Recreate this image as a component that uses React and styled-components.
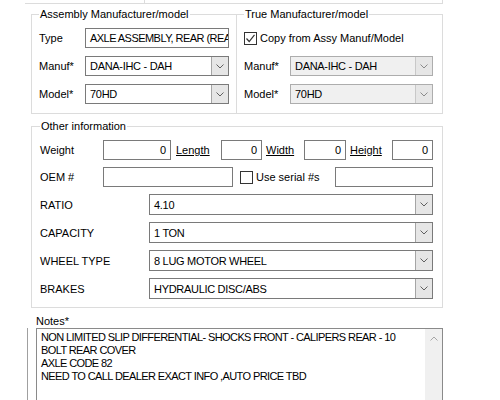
import styled, { createGlobalStyle } from "styled-components";

const GlobalStyle = createGlobalStyle`
  html, body {
    margin: 0;
    padding: 0;
    background: #fff;
    overflow: hidden;
  }
  body {
    font-family: "Liberation Sans", Arial, sans-serif;
    font-size: 11px;
    color: #000;
  }
`;

const Page = styled.div`
  width: 500px;
  height: 400px;
  overflow: hidden;
`;

const TopEdge = styled.div`
  display: flex;
  margin-left: 25px;
  width: 417px;
  height: 3px;
  border-bottom: 1px solid #dcdcdc;
  border-right: 1px solid #dcdcdc;
`;

const TopCell = styled.div`
  width: 119px;
  border-right: 1px solid #dcdcdc;
`;

const GroupRow = styled.div`
  display: flex;
  margin: 3px 0 0 31px;
`;

const Group = styled.fieldset`
  box-sizing: border-box;
  width: ${(p) => p.$w}px;
  min-width: 0;
  margin: ${(p) => p.$m || "0"};
  padding: 7px ${(p) => p.$pr}px ${(p) => p.$pb}px ${(p) => p.$pl}px;
  border: 1px solid #dcdcdc;
  ${(p) => p.$joined && "border-left: none;"}
`;

const Legend = styled.legend`
  margin: 0;
  padding: 0 1px;
  line-height: 14px;
`;

const FieldGrid = styled.div`
  display: grid;
  grid-template-columns: ${(p) => p.$label}px 1fr;
  grid-auto-rows: 20px;
  row-gap: 8px;
  align-items: center;
`;

const Label = styled.span`
  white-space: nowrap;
  ${(p) => p.$w && `width: ${p.$w}px; flex: none;`}
`;

const UnderLabel = styled.span`
  padding-left: ${(p) => p.$pl}px;
  text-decoration: underline;
  white-space: nowrap;
`;

const TextBox = styled.div`
  box-sizing: border-box;
  height: 20px;
  ${(p) => p.$w && `width: ${p.$w}px; flex: none;`}
  display: flex;
  align-items: center;
  justify-content: ${(p) => (p.$right ? "flex-end" : "flex-start")};
  padding: 0 ${(p) => (p.$caps ? 0 : 4)}px 0 4px;
  border: 1px solid #7a7a7a;
  background: #fff;
  white-space: nowrap;
  overflow: hidden;
  letter-spacing: ${(p) => (p.$caps ? "-0.55px" : "0")};
`;

const Combo = styled.div`
  box-sizing: border-box;
  display: flex;
  height: ${(p) => p.$h || 20}px;
  border: 1px solid ${(p) => (p.$disabled ? "#adadad" : "#7a7a7a")};
  background: ${(p) => (p.$disabled ? "#f0f0f0" : "#fff")};
`;

const ComboValue = styled.div`
  flex: 1;
  display: flex;
  align-items: center;
  padding-left: 4px;
  white-space: nowrap;
  overflow: hidden;
  letter-spacing: -0.3px;
`;

const ComboButton = styled.div`
  width: 16px;
  display: flex;
  align-items: center;
  justify-content: center;
  background: #e6e6e6;
  border-left: 1px solid ${(p) => (p.$disabled ? "#c8c8c8" : "#a5a5a5")};
`;

const CheckRow = styled.label`
  grid-column: 1 / -1;
  display: flex;
  align-items: center;
  gap: 3px;
  white-space: nowrap;
`;

const CheckBox = styled.span`
  box-sizing: border-box;
  width: 13px;
  height: 13px;
  flex: none;
  display: flex;
  align-items: center;
  justify-content: center;
  border: 1px solid #333;
  background: #fff;
  margin-left: ${(p) => p.$ml || 0}px;
`;

const OtherBody = styled.div`
  display: flex;
  flex-direction: column;
  gap: 7px;
`;

const MeasureRow = styled.div`
  display: grid;
  grid-template-columns: 63px 68px 50px 41px 42px 42px 46px 41px;
  height: 20px;
  align-items: center;
`;

const OemRow = styled.div`
  display: flex;
  align-items: center;
  height: 20px;
`;

const SerialLabel = styled.span`
  margin-left: 3px;
  white-space: nowrap;
`;

const Spacer = styled.div`
  flex: 1;
`;

const ComboRow = styled.div`
  display: grid;
  grid-template-columns: 109px 1fr;
  align-items: center;
`;

const NotesLabel = styled.div`
  margin-top: 6px;
  padding-left: 36px;
  line-height: 14px;
`;

const NotesFrame = styled.div`
  margin-left: 27px;
  padding-left: 8px;
  border-left: 1px solid #a0a0a0;
`;

const NotesBox = styled.div`
  box-sizing: border-box;
  display: flex;
  width: 407px;
  height: 90px;
  border: 1px solid #8a8a8a;
  background: #fff;
`;

const NotesText = styled.div`
  flex: 1;
  padding: 2px 4px;
  line-height: 13px;
  letter-spacing: -0.6px;
  white-space: nowrap;
`;

const ScrollTrack = styled.div`
  width: 17px;
  display: flex;
  justify-content: center;
  padding-top: 7px;
  background: #f0f0f0;
`;

const Chevron = ({ up, color = "#606060" }) => (
  <svg width="8" height="5" viewBox="0 0 8 5">
    <polyline
      points={up ? "0.5,4.5 4,1 7.5,4.5" : "0.5,0.5 4,4 7.5,0.5"}
      fill="none"
      stroke={color}
      strokeWidth="1"
    />
  </svg>
);

const Check = ({ checked, ml }) => (
  <CheckBox $ml={ml}>
    {checked && (
      <svg width="11" height="11" viewBox="0 0 11 11">
        <polyline points="1.5,5.5 4.2,8.5 9.5,1.8" fill="none" stroke="#333" strokeWidth="1.2" />
      </svg>
    )}
  </CheckBox>
);

const Select = ({ value, disabled, h }) => (
  <Combo $disabled={disabled} $h={h}>
    <ComboValue>{value}</ComboValue>
    <ComboButton $disabled={disabled}>
      <Chevron color={disabled ? "#8a8a8a" : "#606060"} />
    </ComboButton>
  </Combo>
);

const specs = [
  ["RATIO", "4.10"],
  ["CAPACITY", "1 TON"],
  ["WHEEL TYPE", "8 LUG MOTOR WHEEL"],
  ["BRAKES", "HYDRAULIC DISC/ABS"],
];

const notes = [
  "NON LIMITED SLIP DIFFERENTIAL- SHOCKS FRONT - CALIPERS REAR - 10",
  "BOLT REAR COVER",
  "AXLE CODE 82",
  "NEED TO CALL DEALER EXACT INFO ,AUTO PRICE TBD",
];

export default function App() {
  return (
    <Page>
      <GlobalStyle />
      <TopEdge>
        <TopCell />
      </TopEdge>

      <GroupRow>
        <Group $w={206} $pl={7} $pr={7} $pb={9}>
          <Legend>Assembly Manufacturer/model</Legend>
          <FieldGrid $label={46}>
            <Label>Type</Label>
            <TextBox $caps>AXLE ASSEMBLY, REAR (REA</TextBox>
            <Label>Manuf*</Label>
            <Select value="DANA-IHC - DAH" />
            <Label>Model*</Label>
            <Select value="70HD" />
          </FieldGrid>
        </Group>
        <Group $w={206} $joined $pl={7} $pr={9} $pb={9}>
          <Legend>True Manufacturer/model</Legend>
          <FieldGrid $label={46}>
            <CheckRow>
              <Check checked />
              Copy from Assy Manuf/Model
            </CheckRow>
            <Label>Manuf*</Label>
            <Select value="DANA-IHC - DAH" disabled />
            <Label>Model*</Label>
            <Select value="70HD" disabled />
          </FieldGrid>
        </Group>
      </GroupRow>

      <Group $w={412} $m="5px 0 0 31px" $pl={8} $pr={9} $pb={8}>
        <Legend>Other information</Legend>
        <OtherBody>
          <MeasureRow>
            <Label>Weight</Label>
            <TextBox $right>0</TextBox>
            <UnderLabel $pl={5}>Length</UnderLabel>
            <TextBox $right>0</TextBox>
            <UnderLabel $pl={4}>Width</UnderLabel>
            <TextBox $right>0</TextBox>
            <UnderLabel $pl={4}>Height</UnderLabel>
            <TextBox $right>0</TextBox>
          </MeasureRow>
          <OemRow>
            <Label $w={63}>OEM #</Label>
            <TextBox $w={130} />
            <Check ml={7} />
            <SerialLabel>Use serial #s</SerialLabel>
            <Spacer />
            <TextBox $w={98} />
          </OemRow>
          {specs.map(([name, value]) => (
            <ComboRow key={name}>
              <Label>{name}</Label>
              <Select value={value} h={21} />
            </ComboRow>
          ))}
        </OtherBody>
      </Group>

      <NotesLabel>Notes*</NotesLabel>
      <NotesFrame>
        <NotesBox>
          <NotesText>
            {notes.map((line) => (
              <div key={line}>{line}</div>
            ))}
          </NotesText>
          <ScrollTrack>
            <Chevron up color="#a6a6a6" />
          </ScrollTrack>
        </NotesBox>
      </NotesFrame>
    </Page>
  );
}
